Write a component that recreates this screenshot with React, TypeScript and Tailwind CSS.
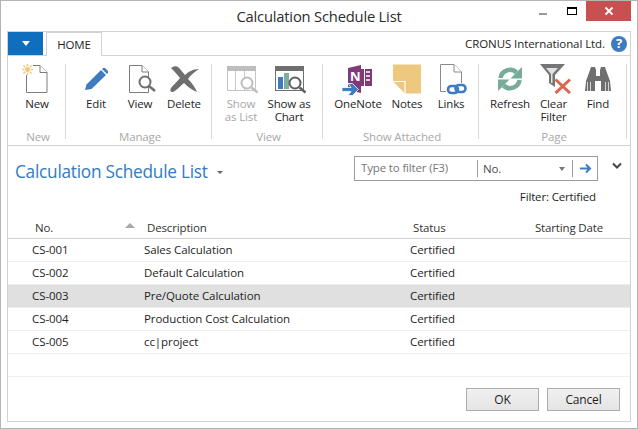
import React from "react";

const icons: Record<string, React.ReactNode> = {
  New: (
    <svg className="mt-[1px] overflow-visible" width="30" height="30" viewBox="0 0 30 30">
      <path d="M4.5 1.5H18L25 8.5V28.5H4.5Z" fill="#fff" stroke="#7d7d7d" />
      <path d="M18 1.5V8.5H25" fill="#fff" stroke="#7d7d7d" />
      <rect x="0" y="0" width="11" height="11" fill="#fff" />
      <path d="M5.5 0V11M0 5.5H11M1.5 1.5L9.5 9.5M9.5 1.5L1.5 9.5" stroke="#f0c87c" strokeWidth="1.6" />
      <circle cx="5.5" cy="5.5" r="3" fill="#f0c87c" stroke="#fff" />
    </svg>
  ),
  Edit: (
    <svg className="mt-[1px]" width="26" height="28" viewBox="0 0 26 28">
      <path d="M2 26L3.5 20.5L18 6L23 11L8.5 25Z" fill="#3f7cbf" />
      <path d="M20 4H22L25 7V9L24 10L19 5Z" fill="#3f7cbf" />
    </svg>
  ),
  View: (
    <svg className="mt-[1px]" width="32" height="30" viewBox="0 0 32 30">
      <path d="M5.5 1.5H18L24.5 8V28.5H5.5Z" fill="#fff" stroke="#7d7d7d" />
      <path d="M18 1.5V8H24.5" fill="#fff" stroke="#7d7d7d" />
      <circle cx="21" cy="18" r="5.5" fill="#fff" stroke="#6f6f6f" strokeWidth="2" />
      <path d="M25 22L31 27" stroke="#6f6f6f" strokeWidth="2.4" />
    </svg>
  ),
  Delete: (
    <svg className="mt-[1px]" width="30" height="29" viewBox="0 0 30 29">
      <path d="M2 4C6 1 9 2 11 5L16 11C19 8 24 5 30 5C25 8 21 12 19 15C23 19 26 23 28 28C23 26 18 22 15 19C11 22 8 26 4 28C1 28 1 26 2 24C4 21 8 18 11 14C8 10 5 7 2 4Z" fill="#6f6f6f" />
    </svg>
  ),
  List: (
    <svg className="mt-[1px]" width="34" height="30" viewBox="0 0 34 30">
      <rect x="3.5" y="2.5" width="28" height="24" fill="#fff" stroke="#c4c4c4" />
      <rect x="3" y="2" width="29" height="5" fill="#bdbdbd" />
      <path d="M11.5 7V26M20.5 7V26" stroke="#c9c9c9" />
      <circle cx="23" cy="19" r="5.5" fill="#fff" stroke="#bdbdbd" strokeWidth="2" />
      <path d="M27.5 23.5L33.5 28.5" stroke="#bdbdbd" strokeWidth="2.4" />
    </svg>
  ),
  Chart: (
    <svg className="mt-[1px]" width="34" height="30" viewBox="0 0 34 30">
      <rect x="3.5" y="2.5" width="28" height="24" fill="#fff" stroke="#6f6f6f" />
      <rect x="3" y="2" width="29" height="5" fill="#6f6f6f" />
      <rect x="6" y="13" width="5" height="12" fill="#3f7cbf" />
      <rect x="12" y="9" width="5" height="16" fill="#7fae9f" />
      <circle cx="23" cy="19" r="5.5" fill="#fff" stroke="#5f5f5f" strokeWidth="2" />
      <path d="M27.5 23.5L33.5 28.5" stroke="#5f5f5f" strokeWidth="2.4" />
    </svg>
  ),
  OneNote: (
    <svg className="mt-[1px]" width="32" height="32" viewBox="0 0 32 32">
      <path d="M6 4L19 1V29L6 26Z" fill="#80397b" />
      <path d="M19 5H30V22H19Z" fill="#80397b" />
      <path d="M24 8H28M24 12H28M24 16H28" stroke="#fff" strokeWidth="1.6" />
      <path d="M22.5 5V22" stroke="#fff" strokeWidth="1" />
      <text x="8" y="17" fill="#fff" fontSize="13" fontWeight="700" fontFamily="'Open Sans', sans-serif">N</text>
      <path d="M0 23.5H9L6 19.5H10.5L16.5 25.5L10.5 31.5H6L9 27.5H0Z" fill="#3f7cbf" stroke="#fff" strokeWidth="0.8" />
    </svg>
  ),
  Notes: (
    <svg width="29" height="31" viewBox="0 0 29 31">
      <path d="M0 1.5H28V30.5H12L0 18.5Z" fill="#efc880" />
      <path d="M0.5 18.5H12V30.5" fill="none" stroke="#fff" strokeWidth="1.2" />
    </svg>
  ),
  Links: (
    <svg width="32" height="32" viewBox="0 0 32 32">
      <path d="M5.5 1.5H19L26.5 9V28.5H5.5Z" fill="#fff" stroke="#8a8a8a" />
      <path d="M19 1.5V9H26.5" fill="#fff" stroke="#8a8a8a" />
      <rect x="11" y="20" width="21" height="12" fill="#fff" />
      <rect x="13" y="23" width="10" height="7" rx="3.5" fill="none" stroke="#3f7cbf" strokeWidth="2.6" />
      <rect x="20.5" y="22" width="10" height="7" rx="3.5" fill="none" stroke="#3f7cbf" strokeWidth="2.6" />
    </svg>
  ),
  Refresh: (
    <svg className="mt-[3px]" width="28" height="28" viewBox="0 0 28 28">
      <path d="M4.5 12A9.5 9.5 0 0 1 20.5 6.5" fill="none" stroke="#78ab9a" strokeWidth="4.6" />
      <path d="M26 1V12.5H14.5Z" fill="#78ab9a" />
      <path d="M23.5 14A9.5 9.5 0 0 1 7.5 19.5" fill="none" stroke="#78ab9a" strokeWidth="4.6" />
      <path d="M2 25V13.5H13.5Z" fill="#78ab9a" />
    </svg>
  ),
  Clear: (
    <svg className="mt-[1px]" width="34" height="30" viewBox="0 0 34 30">
      <path d="M3 0H28L18 11V23L12 19V11Z" fill="#757575" />
      <path d="M9 4H21L15.5 10V19H14V10Z" fill="#e2e2e2" />
      <path d="M18.5 15.5L33 29M33 15.5L18.5 29" stroke="#d9664e" strokeWidth="3" />
    </svg>
  ),
  Find: (
    <svg className="mt-[4px]" width="28" height="24" viewBox="0 0 28 24">
      <path d="M6 3L7 0H11L12 3V9H16V3L17 0H21L22 3L26 14L27 24H17V14H11V24H1L2 14Z" fill="#6f6f6f" />
      <path d="M3.5 15V24M6.5 15V24M21.5 15V24M24.5 15V24" stroke="#fff" strokeWidth="0.7" />
    </svg>
  ),
};

const Btn = ({ w, label, icon, disabled }: { w: string; label: React.ReactNode; icon: string; disabled?: boolean }) => (
  <div className={`${w} flex flex-col items-center`}>
    <div className="h-[29px] mt-[-1px] flex items-start justify-center">{icons[icon]}</div>
    <div className={`mt-[5px] text-center leading-[13px] ${disabled ? "text-[#a8a8a8]" : "text-[#1e1e1e]"}`}>{label}</div>
  </div>
);

const Group = ({ w, title, pl, children }: { w: string; title: string; pl: string; children: React.ReactNode }) => (
  <div className={`${w} h-[75px] mt-[8px] flex flex-col border-r border-[#d9d9d9]`}>
    <div className={`flex h-[67px] shrink-0 ${pl}`}>{children}</div>
    <div className="text-center pl-[3px] text-[#a8a8a8] leading-[12px] shrink-0">{title}</div>
  </div>
);

const rows = [
  ["CS-001", "Sales Calculation"],
  ["CS-002", "Default Calculation"],
  ["CS-003", "Pre/Quote Calculation"],
  ["CS-004", "Production Cost Calculation"],
  ["CS-005", "cc|project"],
];

export default function App() {
  return (
    <div
      className="w-[638px] h-[429px] bg-white border border-[#b4b4b4] flex flex-col text-[11.5px] tracking-[-0.15px] text-[#1e1e1e] overflow-hidden"
      style={{ fontFamily: '"Open Sans", "Liberation Sans", sans-serif' }}
    >
      <div className="h-[30px] shrink-0 flex relative items-center justify-center text-[#2b2b2b] text-[14.75px] tracking-[-0.2px]">
        Calculation Schedule List
        <div className="absolute right-[6px] top-0 flex items-start">
          <div className="w-[29px] h-[20px] flex items-center justify-center">
            <div className="w-[8px] h-[2px] bg-[#9a9a9a] mt-[6px]" />
          </div>
          <div className="w-[29px] h-[20px] flex items-center justify-center">
            <div className="w-[10px] h-[8px] border border-black border-t-2 mt-[-1px]" />
          </div>
          <div className="w-[45px] h-[20px] bg-[#c75050] flex items-center justify-center">
            <svg width="10" height="10" viewBox="0 0 10 10">
              <path d="M1.5 1.5L8.5 8.5M8.5 1.5L1.5 8.5" stroke="#fff" strokeWidth="1.8" />
            </svg>
          </div>
        </div>
      </div>

      <div className="mx-[6px] w-[624px] h-[391px] border border-[#d2d2d2] flex flex-col bg-white">
        <div className="h-[24px] shrink-0 flex items-stretch border-b border-[#d2d2d2] relative">
          <div className="w-[35px] h-[23px] bg-[#106ebe] flex items-center justify-center">
            <div className="w-0 h-0 border-x-[4px] border-x-transparent border-t-[5px] border-t-white" />
          </div>
          <div className="ml-[3px] w-[56px] h-[24px] bg-white border border-b-0 border-[#d2d2d2] flex items-center justify-center text-[#1e1e1e] text-[11.5px]">
            HOME
          </div>
          <div className="ml-auto flex items-center pr-[3px] gap-[6px]">
            <span className="text-[#1e1e1e] tracking-[-0.08px]">CRONUS International Ltd.</span>
            <div className="w-[16px] h-[16px] rounded-full bg-[#3f7cbf] text-white text-[13px] font-bold flex items-center justify-center">?</div>
          </div>
        </div>

        <div className="h-[90px] shrink-0 flex border-b border-[#d2d2d2]">
          <Group w="w-[58px]" title="New" pl="pl-[6px]">
            <Btn w="w-[46px]" label="New" icon="New" />
          </Group>
          <Group w="w-[146px]" title="Manage" pl="pl-[8px]">
            <Btn w="w-[44px]" label="Edit" icon="Edit" />
            <Btn w="w-[44px]" label="View" icon="View" />
            <Btn w="w-[44px]" label="Delete" icon="Delete" />
          </Group>
          <Group w="w-[111px]" title="View" pl="pl-[5px]">
            <Btn w="w-[48px]" label={<>Show<br />as List</>} icon="List" disabled />
            <Btn w="w-[48px]" label={<>Show as<br />Chart</>} icon="Chart" />
          </Group>
          <Group w="w-[156px]" title="Show Attached" pl="pl-[10px]">
            <Btn w="w-[50px]" label="OneNote" icon="OneNote" />
            <Btn w="w-[48px]" label="Notes" icon="Notes" />
            <Btn w="w-[40px]" label="Links" icon="Links" />
          </Group>
          <Group w="w-[148px]" title="Page" pl="pl-[9px]">
            <Btn w="w-[44px]" label="Refresh" icon="Refresh" />
            <Btn w="w-[43px]" label={<>Clear<br />Filter</>} icon="Clear" />
            <Btn w="w-[46px]" label="Find" icon="Find" />
          </Group>
        </div>

        <div className="h-[70px] shrink-0 flex relative">
          <div className="pl-[7px] pt-[14px] flex items-start">
            <span className="text-[#2f7bc4] text-[17.25px] tracking-[-0.25px] leading-[24px]">Calculation Schedule List</span>
            <div className="ml-[9px] mt-[11px] w-0 h-0 border-x-[3px] border-x-transparent border-t-[3px] border-t-[#666]" />
          </div>
          <div className="absolute left-[346px] top-[10px] w-[244px] h-[25px] border border-[#9c9c9c] flex items-center">
            <span className="w-[123px] pl-[6px] text-[#767676] border-r border-[#9c9c9c] h-[17px] leading-[16px]">Type to filter (F3)</span>
            <span className="pl-[5px] flex-1 text-[#4a4a4a]">No.</span>
            <div className="w-0 h-0 border-x-[3.5px] border-x-transparent border-t-[4px] border-t-[#777] mr-[7px]" />
            <div className="w-[25px] h-[17px] border-l border-[#9c9c9c] flex items-center justify-center">
              <svg width="13" height="11" viewBox="0 0 13 11">
                <path d="M1 5.5H11M7 1.5L11 5.5L7 9.5" fill="none" stroke="#3f7cbf" strokeWidth="2" />
              </svg>
            </div>
          </div>
          <svg className="absolute left-[604px] top-[16px]" width="10" height="8" viewBox="0 0 10 8">
            <path d="M1 1.5L5 5.5L9 1.5" fill="none" stroke="#444" strokeWidth="2" />
          </svg>
          <div className="absolute right-[34px] top-[42px] text-[#1e1e1e]">Filter: Certified</div>
        </div>

        <div className="h-[23px] shrink-0 grid grid-cols-[136px_266px_105px_1fr] items-center border-b border-[#d2d2d2] text-[#333] pt-[1px]">
          <div className="pl-[27px] relative">
            No.
            <div className="absolute left-[117px] top-[4px] w-0 h-0 border-x-[5px] border-x-transparent border-b-[5px] border-b-[#a8a8a8]" />
          </div>
          <div className="pl-[3px]">Description</div>
          <div className="pl-[3px]">Status</div>
          <div className="text-right pr-[27px] whitespace-nowrap">Starting Date</div>
        </div>

        {rows.map((r, i) => (
          <div
            key={r[0]}
            className={`h-[23px] shrink-0 grid grid-cols-[136px_266px_105px_1fr] items-center border-b border-[#eeeeee] tracking-[-0.08px] ${i === 2 ? "bg-[#e0e0e0]" : ""}`}
          >
            <div className="pl-[24px]">{r[0]}</div>
            <div>{r[1]}</div>
            <div>Certified</div>
            <div />
          </div>
        ))}
        <div className="h-[23px] shrink-0 border-b border-[#eeeeee]" />

        <div className="flex-1 flex justify-end items-start gap-[8px] pt-[11px] pr-[10px]">
          <div className="w-[73px] h-[23px] border border-[#acacac] bg-linear-to-b from-[#f0f0f0] to-[#e5e5e5] flex items-center justify-center text-[12px]">OK</div>
          <div className="w-[73px] h-[23px] border border-[#acacac] bg-linear-to-b from-[#f0f0f0] to-[#e5e5e5] flex items-center justify-center text-[12px]">Cancel</div>
        </div>
      </div>
    </div>
  );
}
